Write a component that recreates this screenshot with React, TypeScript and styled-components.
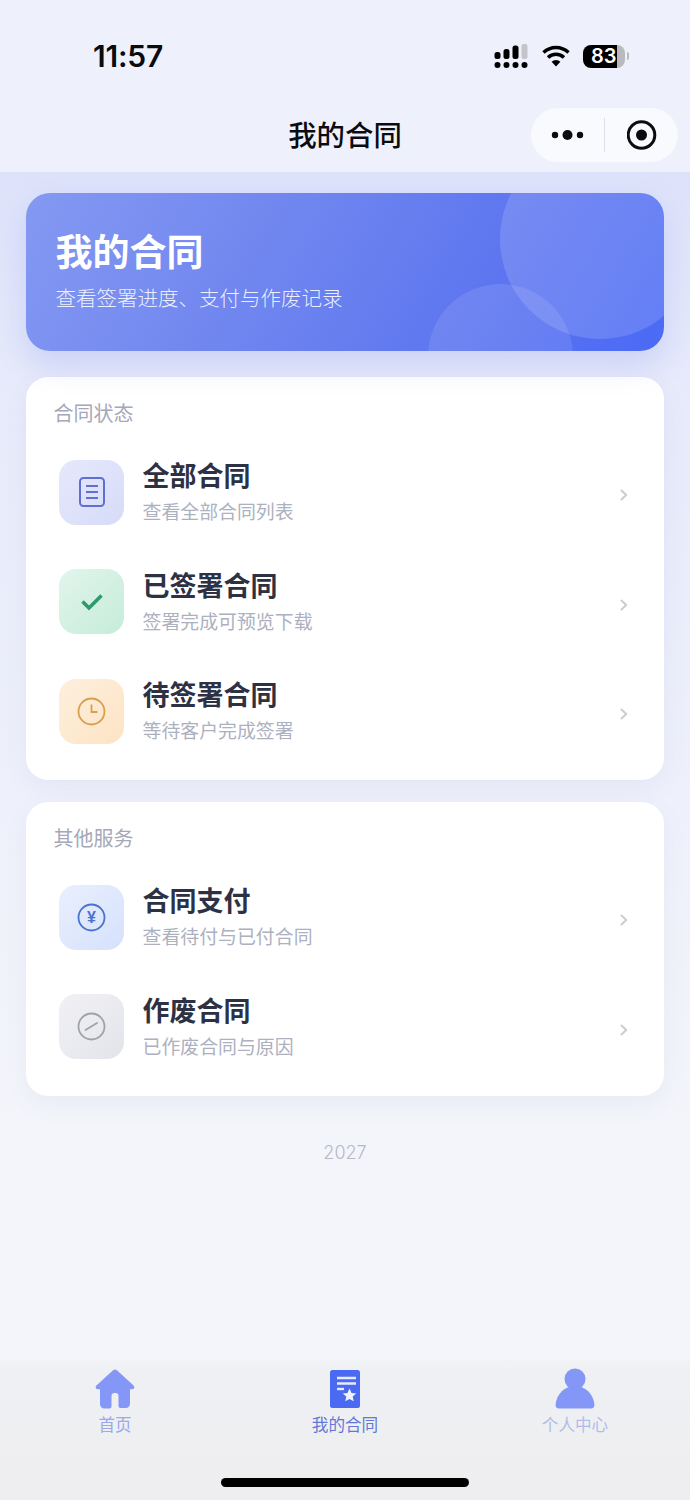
import React from 'react';
import styled, { createGlobalStyle } from 'styled-components';

const GlobalStyle = createGlobalStyle`
  html, body { margin: 0; padding: 0; }
  body {
    font-family: "Noto Sans CJK SC", "Noto Sans", sans-serif;
    background: #f4f5fa;
  }
  * { box-sizing: border-box; }
`;

const Page = styled.div`
  width: 690px;
  height: 1500px;
  display: flex;
  flex-direction: column;
  overflow: hidden;
  background: linear-gradient(180deg, #dde2fa 172px, #e6eafa 380px, #eef0fb 800px, #f3f5fa 1120px, #f4f5fa 1360px);
`;

const Header = styled.header`
  height: 172px;
  background: #eef1fb;
  flex-shrink: 0;
`;

const StatusBar = styled.div`
  height: 100px;
  padding: 36px 61px 0 93px;
  display: flex;
  justify-content: space-between;
  align-items: flex-start;
`;

const Time = styled.span`
  font-family: Inter, "Liberation Sans", sans-serif;
  font-size: 30px;
  line-height: 40px;
  font-weight: 600;
  color: #0b0b0e;
  letter-spacing: -0.2px;
`;

const StatusIcons = styled.div`
  display: flex;
  align-items: center;
  gap: 13.5px;
  height: 40px;
`;

const Battery = styled.div`
  position: relative;
  width: 42px;
  height: 23px;
  border-radius: 8px;
  overflow: hidden;
  background: linear-gradient(90deg, #000 34px, #b9bac0 34px);
  color: #fff;
  font-family: Inter, "Liberation Sans", sans-serif;
  font-size: 20px;
  font-weight: 600;
  line-height: 23px;
  padding-left: 8px;
`;

const BatteryWrap = styled.div`
  display: flex;
  align-items: center;
  gap: 1.5px;
  &::after {
    content: '';
    width: 2.5px;
    height: 8px;
    border-radius: 0 2px 2px 0;
    background: #b9bac0;
  }
`;

const NavBar = styled.div`
  height: 72px;
  padding: 8px 12px 10px 0;
  position: relative;
  display: flex;
  justify-content: flex-end;
  align-items: center;
`;

const NavTitle = styled.h1`
  position: absolute;
  left: 0;
  right: 0;
  top: 13px;
  margin: 0;
  text-align: center;
  font-size: 28.4px;
  line-height: 42px;
  font-weight: 500;
  color: #0b0b10;
`;

const Capsule = styled.div`
  width: 147px;
  height: 54px;
  border-radius: 27px;
  background: rgba(255, 255, 255, 0.62);
  display: flex;
  align-items: center;
`;

const CapsuleCell = styled.div`
  flex: 1;
  height: 34px;
  display: flex;
  align-items: center;
  justify-content: center;
  & + & { border-left: 1px solid #dcdfe8; }
`;

const Main = styled.main`
  flex: 1;
  padding: 21px 26px 0;
  display: flex;
  flex-direction: column;
`;

const Hero = styled.section`
  position: relative;
  height: 158px;
  border-radius: 24px;
  overflow: hidden;
  padding: 32px 30px 0 29.5px;
  color: #fff;
  background: linear-gradient(120deg, #8499f2 0%, #6f85ef 40%, #5b74f0 75%, #4a6af6 100%);
  box-shadow: 0 14px 30px rgba(100, 120, 235, 0.2);
`;

const Bubble = styled.div<{ $left: number; $top: number; $size: number; $alpha: number }>`
  position: absolute;
  left: ${p => p.$left}px;
  top: ${p => p.$top}px;
  width: ${p => p.$size}px;
  height: ${p => p.$size}px;
  border-radius: 50%;
  background: rgba(255, 255, 255, ${p => p.$alpha});
`;

const HeroTitle = styled.h2`
  position: relative;
  margin: 0;
  font-size: 37px;
  line-height: 50px;
  font-weight: 700;
`;

const HeroSub = styled.p`
  position: relative;
  margin: 7px 0 0;
  font-size: 20.5px;
  line-height: 30px;
  font-weight: 300;
  color: rgba(255, 255, 255, 0.88);
`;

const Card = styled.section<{ $top: number }>`
  margin-top: ${p => p.$top}px;
  padding: 21px 0 14px;
  background: #fff;
  border-radius: 22px;
  box-shadow: 0 8px 24px rgba(110, 120, 190, 0.07);
`;

const CardLabel = styled.div`
  padding-left: 27.5px;
  margin-bottom: 10.2px;
  font-size: 20px;
  line-height: 29px;
  color: #a4a8b8;
`;

const Row = styled.div`
  height: 109.7px;
  padding: 0 36px 0 33px;
  display: flex;
  align-items: center;
`;

const IconTile = styled.div<{ $from: string; $to: string }>`
  width: 65px;
  height: 65px;
  flex-shrink: 0;
  border-radius: 17px;
  background: linear-gradient(135deg, ${p => p.$from}, ${p => p.$to});
  display: flex;
  align-items: center;
  justify-content: center;
`;

const RowText = styled.div`
  flex: 1;
  margin-left: 18.5px;
  margin-top: -4px;
`;

const RowTitle = styled.div`
  font-size: 27px;
  line-height: 38px;
  font-weight: 600;
  color: #2d3144;
`;

const RowSub = styled.div`
  margin-top: 3px;
  font-size: 18.9px;
  line-height: 27px;
  font-weight: 400;
  color: #adb1bf;
`;

const ChevronSlot = styled.div`
  margin-top: 6px;
  display: flex;
`;

const YearText = styled.div`
  margin-top: 43px;
  text-align: center;
  font-family: Inter, "Liberation Sans", sans-serif;
  font-size: 18px;
  line-height: 28px;
  font-weight: 300;
  color: #b6b9c7;
`;

const TabBar = styled.nav`
  height: 140px;
  flex-shrink: 0;
  padding-top: 8px;
  background: linear-gradient(180deg, #f1f2f5 0, #eff0f3 14px, #eeeef0 100%);
`;

const TabRow = styled.div`
  display: grid;
  grid-template-columns: repeat(3, 230px);
`;

const Tab = styled.div`
  height: 68px;
  display: flex;
  flex-direction: column;
  align-items: center;
`;

const TabIcon = styled.div`
  height: 42px;
  display: flex;
  align-items: center;
  justify-content: center;
`;

const TabLabel = styled.span<{ $color: string }>`
  margin-top: 3px;
  font-size: 16.6px;
  line-height: 24px;
  color: ${p => p.$color};
`;

const HomeBar = styled.div`
  width: 248px;
  height: 9px;
  margin: 42px auto 0;
  border-radius: 5px;
  background: #000;
`;

const Chevron = () => (
  <svg width="8" height="12" viewBox="0 0 8 12" fill="none">
    <path d="M1.5 1.5 6.2 6l-4.700 4.500" stroke="#cbcdd6" strokeWidth="2" strokeLinecap="round" strokeLinejoin="round" />
  </svg>
);

const DocIcon = () => (
  <svg width="28" height="32" viewBox="0 0 28 32" fill="none" stroke="#5f70d2" strokeWidth="2">
    <rect x="2" y="2" width="24" height="28" rx="3.5" />
    <path d="M8 10h12M8 16h12M8 22h12" />
  </svg>
);

const CheckIcon = () => (
  <svg width="24" height="18" viewBox="0 0 24 18" fill="none" stroke="#2f9a6c" strokeWidth="3.6">
    <path d="M2.5 8.5 9 15 21.5 2.5" />
  </svg>
);

const ClockIcon = () => (
  <svg width="29" height="29" viewBox="0 0 29 29" fill="none" stroke="#d8a04c" strokeWidth="1.8">
    <circle cx="14.5" cy="14.5" r="13" />
    <path d="M14.5 7.5v7.5h6" />
  </svg>
);

const YenIcon = () => (
  <svg width="29" height="29" viewBox="0 0 29 29" fill="none">
    <circle cx="14.5" cy="14.5" r="13" stroke="#4a73cf" strokeWidth="1.8" />
    <text x="14.5" y="19.5" textAnchor="middle" fontSize="16" fontWeight="700" fontFamily="Liberation Sans" fill="#4a73cf">¥</text>
  </svg>
);

const VoidIcon = () => (
  <svg width="29" height="29" viewBox="0 0 29 29" fill="none" stroke="#a0a2a8" strokeWidth="1.8">
    <circle cx="14.5" cy="14.5" r="13" />
    <path d="M8.5 18 20 11" strokeLinecap="round" />
  </svg>
);

const HomeTabIcon = () => (
  <svg width="40" height="40" viewBox="0 0 40 40">
    <path
      fill="#8496f6"
      d="M17.800 1.600a3.200 3.200 0 0 1 4.400 0l16.400 15c1.400 1.300.7 3.600-1.300 3.600H35v14.600a4.200 4.200 0 0 1-4.200 4.200h-5.300a2 2 0 0 1-2-2V27a3 3 0 0 0-3-3h-1a3 3 0 0 0-3 3v10.400a2 2 0 0 1-2 2H9.200A4.200 4.200 0 0 1 5 35.200V20.200H2.700c-2 0-2.700-2.300-1.300-3.600z"
    />
  </svg>
);

const ContractTabIcon = () => (
  <svg width="30" height="38" viewBox="0 0 30 38">
    <rect width="30" height="38" rx="2.500" fill="#4a6af2" />
    <path d="M7 8h19M7 13.500h19" stroke="#e6ebff" strokeWidth="2.400" />
    <path d="M7 19h7" stroke="#e6ebff" strokeWidth="2.400" />
    <path fill="#f0f3ff" d="m19.500 18.500 2 4.400 4.800.5-3.600 3.200 1 4.700-4.200-2.400-4.200 2.400 1-4.700-3.600-3.200 4.800-.5z" />
  </svg>
);

const PersonTabIcon = () => (
  <svg width="40" height="41" viewBox="0 0 40 41">
    <circle cx="20" cy="11" r="10.500" fill="#8496f6" />
    <path fill="#8496f6" d="M20 18c10 0 18.500 8 19.400 18.500.2 2.400-1.300 4-3.400 4H4c-2.100 0-3.600-1.600-3.400-4C1.500 26 10 18 20 18z" />
  </svg>
);

const statusRows = [
  { title: '全部合同', sub: '查看全部合同列表', from: '#e6e9fc', to: '#d6dbf8', icon: <DocIcon /> },
  { title: '已签署合同', sub: '签署完成可预览下载', from: '#e2f5ec', to: '#c5ecd9', icon: <CheckIcon /> },
  { title: '待签署合同', sub: '等待客户完成签署', from: '#fdf0de', to: '#fde3c4', icon: <ClockIcon /> },
];

const serviceRows = [
  { title: '合同支付', sub: '查看待付与已付合同', from: '#e9effd', to: '#d5e1fc', icon: <YenIcon /> },
  { title: '作废合同', sub: '已作废合同与原因', from: '#f1f1f5', to: '#e3e4ea', icon: <VoidIcon /> },
];

type RowData = (typeof statusRows)[number];

const ListRow = ({ row }: { row: RowData }) => (
  <Row>
    <IconTile $from={row.from} $to={row.to}>{row.icon}</IconTile>
    <RowText>
      <RowTitle>{row.title}</RowTitle>
      <RowSub>{row.sub}</RowSub>
    </RowText>
    <ChevronSlot><Chevron /></ChevronSlot>
  </Row>
);

export default function App() {
  return (
    <Page>
      <GlobalStyle />
      <Header>
        <StatusBar>
          <Time>11:57</Time>
          <StatusIcons>
            <svg width="34" height="24" viewBox="0 0 34 24">
              <g fill="#000">
                <rect x="0.500" y="8" width="6" height="7" rx="2.500" />
                <circle cx="3.500" cy="21" r="3" />
                <rect x="9.500" y="5" width="6" height="10" rx="2.500" />
                <circle cx="12.500" cy="21" r="3" />
                <rect x="18.500" y="1.500" width="6" height="13.500" rx="2.500" />
                <circle cx="21.500" cy="21" r="3" />
                <circle cx="30.500" cy="21" r="3" />
              </g>
              <rect x="27.500" y="0" width="6" height="15" rx="2" fill="#c4c5cb" />
            </svg>
            <svg width="28" height="24" viewBox="0 0 28 24" fill="none" stroke="#000" strokeWidth="3.400">
              <path d="M1.500 8.500a18 18 0 0 1 25 0" />
              <path d="M6 13.500a11.500 11.500 0 0 1 16 0" />
              <path d="M14 22.500 9.600 17.800a6.500 6.500 0 0 1 8.800 0z" fill="#000" stroke="none" />
            </svg>
            <BatteryWrap>
              <Battery>83</Battery>
            </BatteryWrap>
          </StatusIcons>
        </StatusBar>
        <NavBar>
          <NavTitle>我的合同</NavTitle>
          <Capsule>
            <CapsuleCell>
              <svg width="33" height="12" viewBox="0 0 33 12" fill="#0b0b10">
                <circle cx="4" cy="6" r="3.200" />
                <circle cx="16.500" cy="6" r="5" />
                <circle cx="29" cy="6" r="3.200" />
              </svg>
            </CapsuleCell>
            <CapsuleCell>
              <svg width="30" height="30" viewBox="0 0 30 30" fill="none">
                <circle cx="14.500" cy="15" r="13.300" stroke="#0b0b10" strokeWidth="3" />
                <circle cx="14.500" cy="15" r="5.500" fill="#0b0b10" />
              </svg>
            </CapsuleCell>
          </Capsule>
        </NavBar>
      </Header>

      <Main>
        <Hero>
          <Bubble $left={474} $top={-54} $size={200} $alpha={0.14} />
          <Bubble $left={402} $top={91} $size={145} $alpha={0.1} />
          <HeroTitle>我的合同</HeroTitle>
          <HeroSub>查看签署进度、支付与作废记录</HeroSub>
        </Hero>

        <Card $top={26}>
          <CardLabel>合同状态</CardLabel>
          {statusRows.map(row => <ListRow key={row.title} row={row} />)}
        </Card>

        <Card $top={21.9}>
          <CardLabel>其他服务</CardLabel>
          {serviceRows.map(row => <ListRow key={row.title} row={row} />)}
        </Card>

        <YearText>2027</YearText>
      </Main>

      <TabBar>
        <TabRow>
          <Tab>
            <TabIcon><HomeTabIcon /></TabIcon>
            <TabLabel $color="#9aa8ee">首页</TabLabel>
          </Tab>
          <Tab>
            <TabIcon><ContractTabIcon /></TabIcon>
            <TabLabel $color="#6278d6">我的合同</TabLabel>
          </Tab>
          <Tab>
            <TabIcon><PersonTabIcon /></TabIcon>
            <TabLabel $color="#b3bce8">个人中心</TabLabel>
          </Tab>
        </TabRow>
        <HomeBar />
      </TabBar>
    </Page>
  );
}
